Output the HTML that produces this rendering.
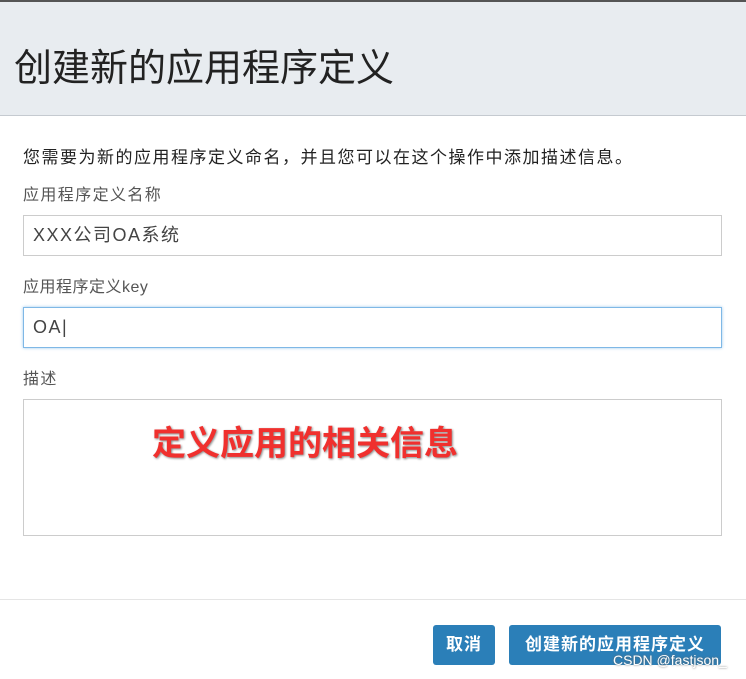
<!DOCTYPE html>
<html><head><meta charset="utf-8"><style>
body{margin:0;width:746px;height:679px;background:#fff;font-family:"Liberation Sans","Noto Sans CJK SC",sans-serif;position:relative;overflow:hidden}
.hd{position:absolute;left:0;top:0;width:746px;height:116px;background:#e8ecf0;border-top:2px solid #555;border-bottom:1px solid #c5cad0;box-sizing:border-box}
.hd h1{position:absolute;left:14px;top:42px;margin:0;font-weight:normal;font-size:38px;line-height:50px;color:#222}
.t{position:absolute;left:23px;font-size:17px;color:#333;line-height:20px;letter-spacing:1.4px}
.in{position:absolute;left:23px;width:699px;box-sizing:border-box;border:1px solid #ccc;font-size:18px;color:#444;padding-left:9px;letter-spacing:1.5px}
.btn{position:absolute;top:625px;height:40px;background:#2b7fb8;color:#fff;font-size:17px;font-weight:bold;text-align:center;line-height:40px;border-radius:3px;letter-spacing:1px}
</style></head><body>
<div class="hd"><h1>创建新的应用程序定义</h1></div>
<div class="t" style="top:148px;color:#222;letter-spacing:1.5px">您需要为新的应用程序定义命名，并且您可以在这个操作中添加描述信息。</div>
<div class="t" style="top:186px;color:#555;font-size:16px">应用程序定义名称</div>
<div class="in" style="top:215px;height:41px;line-height:39px">XXX公司OA系统</div>
<div class="t" style="top:278px;color:#555;font-size:16px;letter-spacing:0.5px">应用程序定义key</div>
<div class="in" style="top:307px;height:41px;line-height:39px;border-color:#7fb8e6;box-shadow:0 0 3px #9cc8ec">OA|</div>
<div class="t" style="top:370px;color:#555;font-size:16px">描述</div>
<div class="in" style="top:399px;height:137px"></div>
<div style="position:absolute;left:152px;top:416px;font-size:34px;font-weight:bold;color:#f0302e;text-shadow:1px 1px 2px #888">定义应用的相关信息</div>
<div style="position:absolute;left:0;top:599px;width:746px;height:1px;background:#e5e5e5"></div>
<div class="btn" style="left:433px;width:62px">取消</div>
<div class="btn" style="left:509px;width:212px">创建新的应用程序定义</div>
<div style="position:absolute;left:613px;top:652px;font-size:14px;color:#fff;text-shadow:0 0 2px #666">CSDN @fastjson_</div>
</body></html>
